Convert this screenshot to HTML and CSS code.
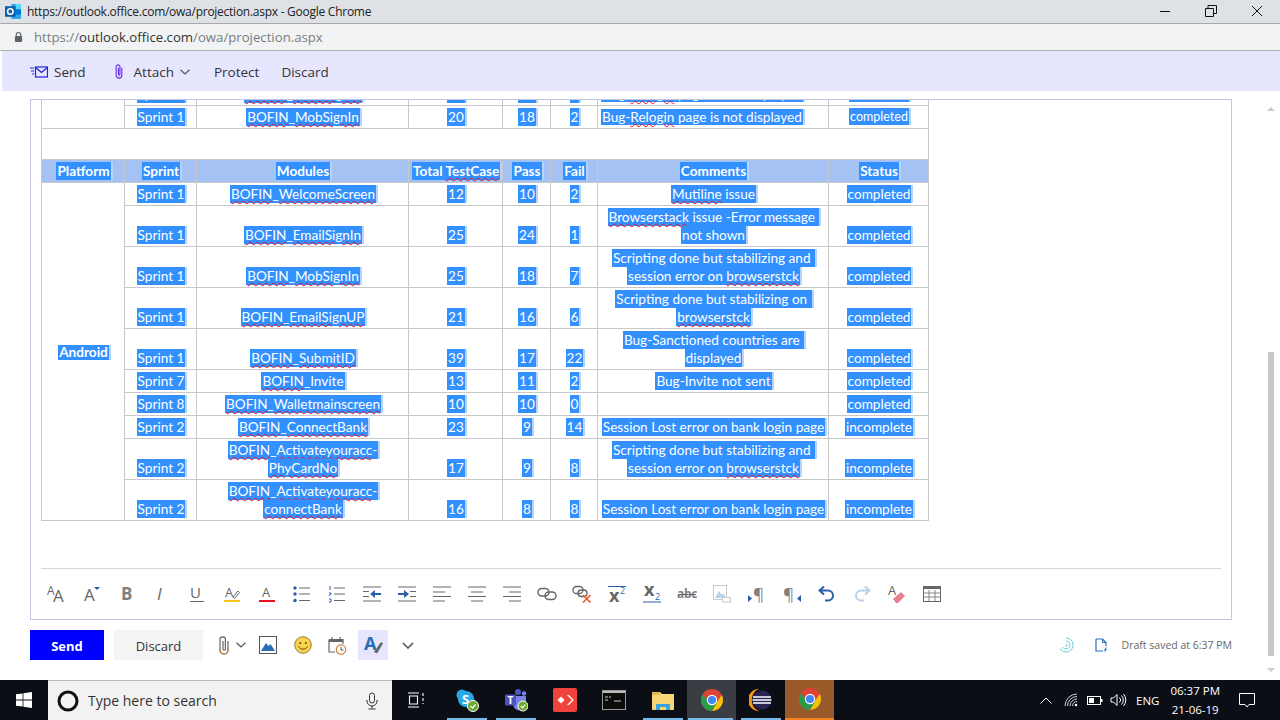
FILE: index.html
```html
<!DOCTYPE html>
<html lang="en">

<head>
  <meta charset="UTF-8">
  <title>https://outlook.office.com/owa/projection.aspx - Google Chrome</title>
  <link rel="stylesheet" href="styles.css">
</head>

<body>
  <div id="window">
    <header class="title-bar">
      <svg class="logo" viewBox="0 0 16 16">
        <path d="M6 1h9v14H6z" fill="#28a8ea" />
        <path d="M10 1h5v5h-5z" fill="#50d9ff" />
        <path d="M10 6h5v5h-5z" fill="#0078d4" />
        <rect x="0" y="3" width="10" height="10" fill="#0f5fa8" />
        <circle cx="5" cy="8" r="2.6" fill="none" stroke="#fff" stroke-width="1.5" />
      </svg>
      <span class="title-text">https://outlook.office.com/owa/projection.aspx - Google Chrome</span>
      <div class="win-buttons">
        <svg viewBox="0 0 14 14"><path d="M2 7.500h10" stroke="#111" fill="none" /></svg>
        <svg viewBox="0 0 14 14"><path d="M1.500 4.500h8v8h-8zM4 4.500V1.500h8.500v8H9.500" stroke="#111" fill="none" /></svg>
        <svg viewBox="0 0 14 14"><path d="M2 2l10 10M12 2L2 12" stroke="#111" fill="none" /></svg>
      </div>
    </header>

    <div class="address-bar">
      <svg class="lock" viewBox="0 0 10 12">
        <path d="M2.500 5V3.500a2.500 2.500 0 0 1 5 0V5" fill="none" stroke="#5f6368" stroke-width="1.300" />
        <rect x="1" y="5" width="8" height="6.500" rx="1" fill="#5f6368" />
      </svg>
      <span class="url"><span class="dim">https://</span>outlook.office.com<span class="dim">/owa/projection.aspx</span></span>
    </div>

    <div class="command-bar">
      <a class="cmd cmd-send">
        <svg viewBox="0 0 18 12" class="cmd-ico">
          <rect x="5.500" y="1" width="12" height="10" fill="none" stroke="#2020e0" stroke-width="1.200" />
          <path d="M5.500 1.500l6 5 6-5M0 2h4M1 5h3M2 8h2" fill="none" stroke="#2020e0" stroke-width="1.200" />
        </svg>
        Send
      </a>
      <a class="cmd cmd-attach">
        <svg viewBox="0 0 12 18" class="clip-ico">
          <path d="M9 5v8a3 3 0 0 1-6 0V4a2 2 0 0 1 4 0v8a.8.8 0 0 1-1.600 0V5" fill="none" stroke="#6a2ce0" stroke-width="1.200" />
        </svg>
        Attach
        <svg viewBox="0 0 10 6" class="chev"><path d="M.5.8L5 5 9.500.8" fill="none" stroke="#555" stroke-width="1.200" /></svg>
      </a>
      <a class="cmd cmd-protect">Protect</a>
      <a class="cmd">Discard</a>
    </div>

    <main class="mail-area">
      <div class="compose-col">
        <section class="editor-frame">
          <div class="editor-body">
            <table class="report">
              <colgroup>
                <col class="c-platform">
                <col class="c-sprint">
                <col class="c-module">
                <col class="c-total">
                <col class="c-pass">
                <col class="c-fail">
                <col class="c-comment">
                <col class="c-status">
              </colgroup>
              <tr>
                <td rowspan="2"></td>
                <td><span class="sel">Sprint 1</span></td>
                <td><span class="sel"><span class="sp">BOFIN</span>_<span class="sp">EmailSignIn</span></span></td>
                <td><span class="sel">25</span></td>
                <td><span class="sel">24</span></td>
                <td><span class="sel">1</span></td>
                <td class="note"><span class="sel">Bug-<span class="sp">Relogin</span> page is not displayed</span></td>
                <td class="small"><span class="sel">completed</span></td>
              </tr>
              <tr>
                <td><span class="sel">Sprint 1</span></td>
                <td><span class="sel"><span class="sp">BOFIN</span>_<span class="sp">MobSignIn</span></span></td>
                <td><span class="sel">20</span></td>
                <td><span class="sel">18</span></td>
                <td><span class="sel">2</span></td>
                <td class="note"><span class="sel">Bug-<span class="sp">Relogin</span> page is not displayed</span></td>
                <td class="small"><span class="sel">completed</span></td>
              </tr>
              <tr class="spacer">
                <td colspan="8"></td>
              </tr>
              <tr class="head">
                <td><span class="sel">Platform</span></td>
                <td><span class="sel">Sprint</span></td>
                <td><span class="sel">Modules</span></td>
                <td><span class="sel">Total <span class="sp">TestCase</span></span></td>
                <td><span class="sel">Pass</span></td>
                <td><span class="sel">Fail</span></td>
                <td><span class="sel">Comments</span></td>
                <td><span class="sel">Status</span></td>
              </tr>
              <tr>
                <td rowspan="10" class="platform"><span class="sel">Android</span></td>
                <td><span class="sel">Sprint 1</span></td>
                <td><span class="sel"><span class="sp">BOFIN</span>_<span class="sp">WelcomeScreen</span></span></td>
                <td><span class="sel">12</span></td>
                <td><span class="sel">10</span></td>
                <td><span class="sel">2</span></td>
                <td><span class="sel"><span class="sp">Mutiline</span> issue</span></td>
                <td><span class="sel">completed</span></td>
              </tr>
              <tr>
                <td><span class="sel">Sprint 1</span></td>
                <td><span class="sel"><span class="sp">BOFIN</span>_<span class="sp">EmailSignIn</span></span></td>
                <td><span class="sel">25</span></td>
                <td><span class="sel">24</span></td>
                <td><span class="sel">1</span></td>
                <td><span class="sel"><span class="sp">Browserstack</span> issue -Error message&nbsp;</span><br><span class="sel">not shown</span></td>
                <td><span class="sel">completed</span></td>
              </tr>
              <tr>
                <td><span class="sel">Sprint 1</span></td>
                <td><span class="sel"><span class="sp">BOFIN</span>_<span class="sp">MobSignIn</span></span></td>
                <td><span class="sel">25</span></td>
                <td><span class="sel">18</span></td>
                <td><span class="sel">7</span></td>
                <td><span class="sel">Scripting done but stabilizing and&nbsp;</span><br><span class="sel">session error on <span class="sp">browserstck</span></span></td>
                <td><span class="sel">completed</span></td>
              </tr>
              <tr>
                <td><span class="sel">Sprint 1</span></td>
                <td><span class="sel"><span class="sp">BOFIN</span>_<span class="sp">EmailSignUP</span></span></td>
                <td><span class="sel">21</span></td>
                <td><span class="sel">16</span></td>
                <td><span class="sel">6</span></td>
                <td><span class="sel">Scripting done but stabilizing on&nbsp;</span><br><span class="sel"><span class="sp">browserstck</span></span></td>
                <td><span class="sel">completed</span></td>
              </tr>
              <tr>
                <td><span class="sel">Sprint 1</span></td>
                <td><span class="sel"><span class="sp">BOFIN</span>_<span class="sp">SubmitID</span></span></td>
                <td><span class="sel">39</span></td>
                <td><span class="sel">17</span></td>
                <td><span class="sel">22</span></td>
                <td><span class="sel">Bug-Sanctioned countries are&nbsp;</span><br><span class="sel">displayed</span></td>
                <td><span class="sel">completed</span></td>
              </tr>
              <tr>
                <td><span class="sel">Sprint 7</span></td>
                <td><span class="sel"><span class="sp">BOFIN</span>_Invite</span></td>
                <td><span class="sel">13</span></td>
                <td><span class="sel">11</span></td>
                <td><span class="sel">2</span></td>
                <td><span class="sel">Bug-Invite not sent</span></td>
                <td><span class="sel">completed</span></td>
              </tr>
              <tr>
                <td><span class="sel">Sprint 8</span></td>
                <td><span class="sel"><span class="sp">BOFIN</span>_<span class="sp">Walletmainscreen</span></span></td>
                <td><span class="sel">10</span></td>
                <td><span class="sel">10</span></td>
                <td><span class="sel">0</span></td>
                <td></td>
                <td><span class="sel">completed</span></td>
              </tr>
              <tr>
                <td><span class="sel">Sprint 2</span></td>
                <td><span class="sel"><span class="sp">BOFIN</span>_<span class="sp">ConnectBank</span></span></td>
                <td><span class="sel">23</span></td>
                <td><span class="sel">9</span></td>
                <td><span class="sel">14</span></td>
                <td><span class="sel">Session Lost error on bank login page</span></td>
                <td><span class="sel">incomplete</span></td>
              </tr>
              <tr>
                <td><span class="sel">Sprint 2</span></td>
                <td><span class="sel"><span class="sp">BOFIN</span>_<span class="sp">Activateyouracc</span>-</span><br><span class="sel"><span class="sp">PhyCardNo</span></span></td>
                <td><span class="sel">17</span></td>
                <td><span class="sel">9</span></td>
                <td><span class="sel">8</span></td>
                <td><span class="sel">Scripting done but stabilizing and&nbsp;</span><br><span class="sel">session error on <span class="sp">browserstck</span></span></td>
                <td><span class="sel">incomplete</span></td>
              </tr>
              <tr>
                <td><span class="sel">Sprint 2</span></td>
                <td><span class="sel"><span class="sp">BOFIN</span>_<span class="sp">Activateyouracc</span>-</span><br><span class="sel"><span class="sp">connectBank</span></span></td>
                <td><span class="sel">16</span></td>
                <td><span class="sel">8</span></td>
                <td><span class="sel">8</span></td>
                <td><span class="sel">Session Lost error on bank login page</span></td>
                <td><span class="sel">incomplete</span></td>
              </tr>
            </table>
          </div>

          <div class="format-bar">
            <!-- font size -->
            <svg viewBox="0 0 20 20"><text x="0" y="11" font-size="12" class="ti">A</text><text x="6" y="18" font-size="17" class="ti">A</text></svg>
            <svg viewBox="0 0 20 20"><text x="2" y="17" font-size="17" class="ti">A</text><path d="M12 3h6l-3 3z" fill="#2b5fa8" /></svg>
            <svg viewBox="0 0 20 20"><text x="4" y="16" font-size="17" font-weight="700" class="tl">B</text></svg>
            <svg viewBox="0 0 20 20"><text x="5" y="16" font-size="17" font-style="italic" class="ti">I</text></svg>
            <svg viewBox="0 0 20 20"><text x="3" y="14" font-size="15" class="ti">U</text><path d="M3 17.500h14" stroke="#666" /></svg>
            <svg viewBox="0 0 20 20"><text x="3" y="13" font-size="13" class="ti">A</text><path d="M11 13l5-6 1.500 1.500-5 6z" fill="none" stroke="#666" /><path d="M2 17h16" stroke="#f7c325" stroke-width="2" /></svg>
            <svg viewBox="0 0 20 20"><text x="5" y="13" font-size="13" class="ti">A</text><path d="M2 17h16" stroke="#e81123" stroke-width="2" /></svg>
            <!-- lists -->
            <svg viewBox="0 0 20 20"><circle cx="3" cy="4" r="1.700" fill="#2b5fa8" /><circle cx="3" cy="10" r="1.700" fill="#2b5fa8" /><circle cx="3" cy="16.500" r="1.700" fill="#2b5fa8" /><path d="M7 4h11M7 10h11M7 16.500h11" stroke="#666" /></svg>
            <svg viewBox="0 0 20 20"><path d="M3 2v4M2 9h2v1l-2 1.500V12M2 15h2v3H2" stroke="#2b5fa8" fill="none" /><path d="M7 4h11M7 10h11M7 16.500h11" stroke="#666" /></svg>
            <!-- indent -->
            <svg viewBox="0 0 20 20"><path d="M1 3h18M1 17h18M1 7.500h6M1 12.500h6M13 10h6" stroke="#666" /><path d="M8 10l5-4v8z" fill="#2b5fa8" /><path d="M12 10h7" stroke="#2b5fa8" stroke-width="2" /></svg>
            <svg viewBox="0 0 20 20"><path d="M1 3h18M1 17h18M13 7.500h6M13 12.500h6" stroke="#666" /><path d="M12 10L7 6v8z" fill="#2b5fa8" /><path d="M1 10h7" stroke="#2b5fa8" stroke-width="2" /></svg>
            <!-- align -->
            <svg viewBox="0 0 20 20"><path d="M1 3h18M1 8h12M1 12.500h18M1 17h12" stroke="#666" /></svg>
            <svg viewBox="0 0 20 20"><path d="M1 3h18M4 8h12M1 12.500h18M4 17h12" stroke="#666" /></svg>
            <svg viewBox="0 0 20 20"><path d="M1 3h18M7 8h12M1 12.500h18M7 17h12" stroke="#666" /></svg>
            <!-- link -->
            <svg viewBox="0 0 20 20"><rect x="1" y="4.500" width="11" height="7.500" rx="3.700" fill="none" stroke="#666" stroke-width="1.400" /><rect x="8" y="8" width="11" height="7.500" rx="3.700" fill="none" stroke="#666" stroke-width="1.400" /></svg>
            <svg viewBox="0 0 20 20"><rect x="1" y="2.500" width="10" height="7" rx="3.500" fill="none" stroke="#666" stroke-width="1.300" /><rect x="6" y="6" width="9" height="6.500" rx="3.200" fill="none" stroke="#666" stroke-width="1.300" /><path d="M11 11l7.500 7.500M18.500 11L11 18.500" stroke="#f15a29" stroke-width="1.700" /></svg>
            <!-- scripts -->
            <svg viewBox="0 0 20 20"><path d="M1 2.500h18" stroke="#2b5fa8" /><text x="2" y="18" font-size="18" font-weight="700" class="ti">x</text><text x="13" y="10" font-size="9" class="tb">2</text></svg>
            <svg viewBox="0 0 20 20"><path d="M1 18h18" stroke="#2b5fa8" /><text x="2" y="12" font-size="18" font-weight="700" class="ti">x</text><text x="13" y="16" font-size="9" class="tb">2</text></svg>
            <svg viewBox="0 0 20 20"><text x="0" y="14" font-size="12" font-weight="700" letter-spacing="-.3" class="tl">abc</text><path d="M1 10.500h18" stroke="#666" /></svg>
            <svg viewBox="0 0 20 20"><rect x="1.500" y="1.500" width="13" height="14" fill="#fff" stroke="#c8c8c8" /><path d="M3 14l4-7 3 4 1-2 3 5z" fill="#b8cfee" /><rect x="10.500" y="13.500" width="8" height="4.500" fill="#fff" stroke="#c8c8c8" /></svg>
            <!-- direction -->
            <svg viewBox="0 0 20 20"><path d="M1 11l4 3.500L1 18z" fill="#2b5fa8" /><text x="6" y="16" font-size="17" class="tl">¶</text></svg>
            <svg viewBox="0 0 20 20"><path d="M19 11l-4 3.500 4 3.500z" fill="#2b5fa8" /><text x="1" y="16" font-size="17" class="tl">¶</text></svg>
            <!-- undo redo -->
            <svg viewBox="0 0 20 20"><path d="M7 2.500L2.500 6.500 7 10.500M3 6.500h8a5 5 0 0 1 0 10H8" fill="none" stroke="#2b5fa8" stroke-width="2" /></svg>
            <svg viewBox="0 0 20 20"><path d="M13 2.500l4.500 4-4.500 4M17 6.500H9a5 5 0 0 0 0 10h3" fill="none" stroke="#bcd0ea" stroke-width="2" /></svg>
            <!-- clear format, table -->
            <svg viewBox="0 0 20 20"><text x="1" y="11" font-size="13" class="ti">A</text><path d="M6 15l8-7 4 4-7 7H9z" fill="#e8808f" /></svg>
            <svg viewBox="0 0 20 20"><rect x="1.500" y="2.500" width="17" height="15" fill="#fff" stroke="#666" /><path d="M1.500 3.500h17" stroke="#666" stroke-width="3" /><path d="M1.500 9h17M1.500 13h17M7 6v11M13 6v11" stroke="#888" /></svg>
          </div>
        </section>

        <div class="action-row">
          <button class="btn btn-send">Send</button>
          <button class="btn btn-discard">Discard</button>
          <svg class="act-clip" viewBox="0 0 16 20">
            <path d="M12 6v9a4 4 0 0 1-8 0V4.500a2.700 2.700 0 0 1 5.400 0V14a1.200 1.200 0 0 1-2.400 0V6" fill="none" stroke="#666" stroke-width="1.200" />
            <path d="M4 14v1a4 4 0 0 0 8 0v-1" fill="none" stroke="#c9823a" stroke-width="1.200" />
          </svg>
          <svg class="act-chev" viewBox="0 0 10 6"><path d="M.5.8L5 5 9.500.8" fill="none" stroke="#555" stroke-width="1.200" /></svg>
          <svg class="act-image" viewBox="0 0 18 18">
            <rect x=".5" y=".5" width="17" height="17" fill="#fff" stroke="#555" />
            <path d="M2 15l5-8 2.500 3 2-2 4.500 7z" fill="#2b6cb8" />
          </svg>
          <svg class="act-smile" viewBox="0 0 18 18">
            <circle cx="9" cy="9" r="8.300" fill="#f9d34c" stroke="#7a6320" stroke-width=".8" />
            <circle cx="6.200" cy="7" r="1" fill="#5a4a10" />
            <circle cx="11.800" cy="7" r="1" fill="#5a4a10" />
            <path d="M4.500 10.500c1.500 3.500 7.500 3.500 9 0" fill="none" stroke="#5a4a10" stroke-width="1" />
          </svg>
          <svg class="act-cal" viewBox="0 0 19 19">
            <path d="M1 3.500h14V8M1 3.500V16h6" fill="none" stroke="#666" stroke-width="1.200" />
            <path d="M1 5h14" stroke="#666" stroke-width="2" />
            <path d="M4 1v3M12 1v3" stroke="#666" stroke-width="1.200" />
            <circle cx="13" cy="13.500" r="4.700" fill="#fff" stroke="#c9823a" stroke-width="1.200" />
            <path d="M13 11v3h2.500" fill="none" stroke="#555" />
          </svg>
          <div class="act-format">
            <svg viewBox="0 0 24 24">
              <text x="3" y="17" font-size="18" font-weight="700" class="tb">A</text>
              <path d="M13 19l7-10 2 1.500-6 10z" fill="#666" />
            </svg>
          </div>
          <svg class="act-more" viewBox="0 0 12 7"><path d="M1 1l5 5 5-5" fill="none" stroke="#555" stroke-width="1.600" /></svg>
          <div class="draft-info">
            <svg class="spin" viewBox="0 0 16 16">
              <path d="M8 1a7 7 0 1 1-6 10.500M8 4a4 4 0 1 1-3.500 6M8 7a1.200 1.200 0 1 1-1 1.800" fill="none" stroke="#6cc6dc" stroke-width="1" />
            </svg>
            <svg class="doc" viewBox="0 0 13 15">
              <path d="M1 1h6.500L11 4.500V8M1 1v12h7" fill="none" stroke="#2b6cb8" stroke-width="1.200" />
              <path d="M7.500 1v3.500H11" fill="none" stroke="#2b6cb8" />
              <path d="M12 8l-3 4 1 .5-1 2.500 3-4-1-.5z" fill="#2b6cb8" />
            </svg>
            <span class="draft-text">Draft saved at 6:37 PM</span>
          </div>
        </div>
      </div>

      <div class="scroll-rail">
        <i class="arrow-up"></i>
        <div class="scroll-track"><div class="scroll-thumb"></div></div>
        <i class="arrow-down"></i>
      </div>
    </main>

    <footer class="taskbar">
      <div class="start">
        <svg viewBox="0 0 16 16"><path d="M0 2.300l6.600-.9v6.200H0zM7.400 1.300L16 0v7.600H7.400zM0 8.400h6.600v6.200L0 13.700zM7.400 8.400H16V16l-8.600-1.200z" fill="#fff" /></svg>
      </div>
      <div class="search-box">
        <svg class="cortana" viewBox="0 0 22 22"><circle cx="11" cy="11" r="9" fill="none" stroke="#111" stroke-width="3" /></svg>
        <span class="search-text">Type here to search</span>
        <svg class="mic" viewBox="0 0 14 18">
          <rect x="4.500" y="1" width="5" height="10" rx="2.500" fill="none" stroke="#333" />
          <path d="M2 8v1a5 5 0 0 0 10 0V8M7 14v2.500M3.500 17h7" fill="none" stroke="#333" />
        </svg>
      </div>
      <div class="task-view">
        <svg viewBox="0 0 18 16"><path d="M1 1h11M1 15h11M2.500 4h8v8h-8zM16 1v3M16 6v3M16 11v1" fill="none" stroke="#fff" stroke-width="1.100" /></svg>
      </div>
      <div class="task-icons">
        <div class="task on">
          <svg viewBox="0 0 24 24">
            <circle cx="7" cy="7" r="5.500" fill="#28a8ea" /><circle cx="15" cy="15" r="5.500" fill="#28a8ea" />
            <circle cx="11" cy="11" r="8" fill="#28a8ea" />
            <text x="7" y="16" font-size="13" font-weight="700" class="tw">S</text>
            <circle cx="18" cy="18" r="5.500" fill="#6aa82f" stroke="#fff" /><path d="M15.500 18l2 2 3-3.500" fill="none" stroke="#fff" stroke-width="1.200" />
          </svg>
        </div>
        <div class="task on">
          <svg viewBox="0 0 24 24">
            <circle cx="14" cy="4" r="3" fill="#5059c9" /><circle cx="20" cy="5.500" r="2.200" fill="#7b83eb" />
            <path d="M9 8h13v8a5 5 0 0 1-13 0z" fill="#7b83eb" />
            <rect x="1" y="6.500" width="11" height="11" rx="1" fill="#4b53bc" />
            <text x="3.500" y="15.500" font-size="10" font-weight="700" class="tw">T</text>
            <circle cx="19" cy="18" r="5" fill="#6aa82f" stroke="#fff" /><path d="M16.800 18l1.800 1.800 2.700-3.200" fill="none" stroke="#fff" stroke-width="1.200" />
          </svg>
        </div>
        <div class="task">
          <svg viewBox="0 0 24 24">
            <rect width="24" height="24" rx="2" fill="#ef443b" />
            <path d="M8 8.500l3.500 3.500L8 15.500 4.500 12zM14 7l5 5-5 5 1.800 0 5-5-5-5z" fill="#fff" />
          </svg>
        </div>
        <div class="task">
          <svg viewBox="0 0 24 20">
            <rect x=".5" y=".5" width="23" height="19" fill="#0c0c0c" stroke="#999" />
            <path d="M1 1h22v2H1z" fill="#bbb" />
            <path d="M3 7h3M7 7h2M3 10h3M12 11h7" stroke="#ccc" />
          </svg>
        </div>
        <div class="task on">
          <svg viewBox="0 0 24 20">
            <path d="M1 2h8l2 2h12v15a1 1 0 0 1-1 1H2a1 1 0 0 1-1-1z" fill="#f7d774" />
            <path d="M1 2h8v3H1z" fill="#e6b94a" />
            <path d="M5 20v-6h14v6h-4v-3H9v3z" fill="#35a4e0" />
          </svg>
        </div>
        <div class="task on current">
          <svg viewBox="0 0 24 24">
            <circle cx="12" cy="12" r="11" fill="#db4437" />
            <path d="M21.800 7A11 11 0 0 1 12 23l5-9z" fill="#f4c20d" />
            <path d="M2.500 6.500A11 11 0 0 0 12 23l5-9-5 2z" fill="#2a9d4a" />
            <circle cx="12" cy="12" r="5.200" fill="#fff" /><circle cx="12" cy="12" r="4" fill="#4285f4" />
          </svg>
        </div>
        <div class="task on">
          <svg viewBox="0 0 24 24">
            <path d="M10 1a11 11 0 0 0 0 22A12 12 0 0 1 10 1z" fill="#f7941e" />
            <circle cx="13" cy="12" r="9.500" fill="#2c2255" />
            <path d="M4 9h18M3.500 12h19M4 15h18" stroke="#fff" stroke-width="1.500" />
          </svg>
        </div>
        <div class="task alert">
          <svg viewBox="0 0 24 24">
            <circle cx="12" cy="12" r="11" fill="#db4437" />
            <path d="M21.800 7A11 11 0 0 1 12 23l5-9z" fill="#f4c20d" />
            <path d="M2.500 6.500A11 11 0 0 0 12 23l5-9-5 2z" fill="#2a9d4a" />
            <circle cx="12" cy="12" r="5.200" fill="#fff" /><circle cx="12" cy="12" r="4" fill="#4285f4" />
          </svg>
        </div>
      </div>
      <div class="tray">
        <svg class="tray-chev" viewBox="0 0 12 7"><path d="M.5 6.500L6 1l5.500 5.500" fill="none" stroke="#fff" /></svg>
        <svg class="tray-wifi" viewBox="0 0 14 14"><path d="M1 13A12 12 0 0 1 13 1M3.500 13A9.500 9.500 0 0 1 13 3.500M6 13a7 7 0 0 1 7-7M8.500 13A4.500 4.500 0 0 1 13 8.500" fill="none" stroke="#ccc" /><circle cx="12" cy="12" r="1.300" fill="#fff" /></svg>
        <svg class="tray-batt" viewBox="0 0 16 9"><rect x=".5" y=".5" width="13" height="8" fill="none" stroke="#fff" /><rect x="2" y="2" width="5" height="5" fill="#fff" /><path d="M14 3h1.500v3H14z" fill="#fff" /></svg>
        <svg class="tray-vol" viewBox="0 0 17 14"><path d="M1 5h2.500L7 1.500v11L3.500 9H1z" fill="none" stroke="#fff" /><path d="M9.500 4.500a3.500 3.500 0 0 1 0 5M11.500 2.500a6.500 6.500 0 0 1 0 9M13.500 1a9 9 0 0 1 0 12" fill="none" stroke="#fff" /></svg>
        <span class="tray-lang">ENG</span>
        <div class="tray-clock">
          <span>06:37 PM</span>
          <span>21-06-19</span>
        </div>
        <svg class="tray-note" viewBox="0 0 16 16"><path d="M.5 1.500h15v11H10L8 15l-2-2.500H.5z" fill="none" stroke="#fff" /></svg>
      </div>
    </footer>
  </div>
</body>

</html>
```

FILE: styles.css
```css
/* reset */
* {
  margin: 0;
  padding: 0;
  box-sizing: border-box;
}

body {
  width: 1280px;
  height: 720px;
  overflow: hidden;
  background-color: #fff;
  font-family: "Open Sans", "Liberation Sans", sans-serif;
  color: #333;
}

svg {
  display: block;
  flex: none;
}

#window {
  display: flex;
  flex-direction: column;
  height: 720px;
}

/* chrome window title */
.title-bar {
  display: flex;
  align-items: center;
  flex: none;
  height: 24px;
  padding-left: 5px;
  background-color: #dee1e6;
  border-bottom: 1px solid #a9a9a9;
}

.logo {
  width: 17px;
  height: 17px;
  margin-right: 5px;
}

.title-text {
  font-size: 12px;
  letter-spacing: -.26px;
  color: #222;
}

.win-buttons {
  display: flex;
  margin-left: auto;
  padding-bottom: 2px;
}

.win-buttons svg {
  width: 14px;
  height: 14px;
  margin-left: 32px;
}

.win-buttons svg:last-child {
  margin-right: 16px;
}

.address-bar {
  display: flex;
  align-items: center;
  flex: none;
  height: 27px;
  padding-left: 14px;
  background-color: #f1f3f4;
  border-bottom: 1px solid #b4b4b4;
}

.lock {
  width: 9px;
  height: 12px;
  margin-right: 11px;
}

.url {
  font-size: 13.200px;
  color: #333;
}

.url .dim {
  color: #7a7d80;
}

/* outlook command bar */
.command-bar {
  display: flex;
  align-items: center;
  flex: none;
  height: 40px;
  margin-left: 2px;
  padding-left: 28px;
  padding-top: 1px;
  background-color: #e6e6ff;
  font-size: 13.500px;
}

.cmd {
  display: flex;
  align-items: center;
  color: #333;
}

.cmd-ico {
  width: 18px;
  height: 12px;
  margin-right: 6px;
}

.clip-ico {
  width: 12px;
  height: 17px;
  margin-right: 9px;
}

.chev {
  width: 10px;
  height: 6px;
  margin-left: 6px;
}

.cmd-send {
  margin-right: 27px;
}

.cmd-attach {
  margin-right: 24px;
}

.cmd-protect {
  margin-right: 22px;
}

/* main compose */
.mail-area {
  display: flex;
  flex: 1;
  min-height: 0;
}

.compose-col {
  flex: none;
  width: 1232px;
  margin-left: 30px;
  padding-top: 8px;
}

.editor-frame {
  display: flex;
  flex-direction: column;
  width: 1202px;
  height: 521px;
  border: 1px solid #c4c4e8;
}

.editor-body {
  flex: none;
  height: 468px;
  padding-left: 10px;
  overflow: hidden;
}

.report {
  width: 887px;
  margin-top: -18px;
  table-layout: fixed;
  border-collapse: collapse;
  font-family: Lato, "Liberation Sans", sans-serif;
  font-size: 13.600px;
  color: #fff;
}

.report td {
  padding: 2px 0 2px 3px;
  border: 1px solid #c8c8c8;
  text-align: center;
  vertical-align: bottom;
  line-height: 18px;
}

.c-platform { width: 83px; }
.c-sprint { width: 72px; }
.c-module { width: 212px; }
.c-total { width: 94px; }
.c-pass { width: 48px; }
.c-fail { width: 47px; }
.c-comment { width: 231px; }
.c-status { width: 100px; }

.sel {
  display: inline-block;
  padding: 0 1px;
  background-color: #3390ff;
  border-right: 2px solid #b5d5fb;
  white-space: nowrap;
}

.sp {
  text-decoration: underline wavy #e81123 1px;
  text-underline-offset: 1px;
}

.report .spacer td {
  height: 31px;
}

.report .head td {
  background-color: #a4c2f4;
  font-weight: 700;
  vertical-align: middle;
}

.report .platform {
  font-weight: 700;
  vertical-align: middle;
}

.platform .sel {
  line-height: 15px;
}

.report .note {
  text-align: left;
  vertical-align: top;
  padding-left: 3px;
}

.note .sel {
  line-height: 16px;
}

.small {
  font-size: 12.500px;
}

.small .sel {
  line-height: 17px;
}

/* format toolbar */
.format-bar {
  display: flex;
  align-items: center;
  flex: none;
  height: 51px;
  margin: 0 10px;
  padding-left: 6px;
  border-top: 1px solid #d6d6d6;
}

.format-bar svg {
  width: 20px;
  height: 20px;
  margin-right: 15px;
}

.ti {
  font-family: "Open Sans", sans-serif;
  fill: #666;
}

.tl {
  font-family: "Open Sans", sans-serif;
  fill: #808080;
}

.tb {
  font-family: "Open Sans", sans-serif;
  fill: #2b6cb8;
}

.tw {
  font-family: "Open Sans", sans-serif;
  fill: #fff;
}

/* send row */
.action-row {
  display: flex;
  align-items: center;
  width: 1202px;
  height: 30px;
  margin-top: 10px;
}

.btn {
  height: 30px;
  padding-top: 1px;
  border: 0;
  font-family: "Open Sans", sans-serif;
  font-size: 13px;
}

.btn-send {
  width: 74px;
  margin-right: 10px;
  background-color: #00f;
  color: #fff;
  font-weight: 700;
}

.btn-discard {
  width: 89px;
  margin-right: 13px;
  background-color: #f4f4f4;
  color: #333;
}

.act-clip {
  width: 16px;
  height: 20px;
  margin-right: 4px;
}

.act-chev {
  width: 10px;
  height: 6px;
  margin-right: 13px;
}

.act-image {
  width: 18px;
  height: 18px;
  margin-right: 17px;
}

.act-smile {
  width: 18px;
  height: 18px;
  margin-right: 16px;
}

.act-cal {
  width: 19px;
  height: 19px;
  margin-right: 11px;
}

.act-format {
  display: flex;
  align-items: center;
  justify-content: center;
  width: 30px;
  height: 30px;
  margin-right: 14px;
  background-color: #e6e6ff;
}

.act-format svg {
  width: 24px;
  height: 24px;
}

.act-more {
  width: 12px;
  height: 7px;
}

.draft-info {
  display: flex;
  align-items: center;
  margin-left: auto;
}

.spin {
  width: 16px;
  height: 16px;
  margin-right: 21px;
}

.doc {
  width: 13px;
  height: 15px;
  margin-right: 14px;
}

.draft-text {
  font-size: 10.500px;
  color: #666;
}

/* page scrollbar */
.scroll-rail {
  display: flex;
  flex-direction: column;
  align-items: center;
  flex: none;
  width: 18px;
  padding-top: 16px;
}

.arrow-up {
  width: 0;
  height: 0;
  border-left: 4px solid transparent;
  border-right: 4px solid transparent;
  border-bottom: 4px solid #ccc;
}

.arrow-down {
  width: 0;
  height: 0;
  margin-top: 12px;
  border-left: 4px solid transparent;
  border-right: 4px solid transparent;
  border-top: 4px solid #ccc;
}

.scroll-track {
  display: flex;
  flex-direction: column;
  flex: none;
  height: 545px;
  padding-top: 241px;
}

.scroll-thumb {
  flex: 1;
  width: 6px;
  background-color: #c8c8c8;
}

/* windows taskbar */
.taskbar {
  display: flex;
  align-items: center;
  flex: none;
  height: 40px;
  background-color: #0b0e14;
}

.start {
  display: flex;
  justify-content: center;
  width: 48px;
}

.start svg {
  width: 16px;
  height: 16px;
}

.search-box {
  display: flex;
  align-items: center;
  width: 344px;
  height: 40px;
  padding-left: 9px;
  background-color: #f2f2f2;
  border-top: 1px solid #bbb;
}

.cortana {
  width: 22px;
  height: 22px;
  margin-right: 9px;
}

.search-text {
  font-size: 14px;
  color: #333;
}

.mic {
  width: 14px;
  height: 18px;
  margin-left: auto;
  margin-right: 13px;
}

.task-view {
  display: flex;
  justify-content: center;
  width: 48px;
}

.task-view svg {
  width: 18px;
  height: 16px;
}

.task-icons {
  display: flex;
  height: 40px;
  margin-left: 2px;
}

.task {
  position: relative;
  display: flex;
  align-items: center;
  justify-content: center;
  width: 49px;
  height: 40px;
}

.task svg {
  width: 24px;
  height: 24px;
}

.task.on::after {
  content: "";
  position: absolute;
  left: 5px;
  right: 4px;
  bottom: 0;
  height: 2px;
  background-color: #76b9ed;
}

.task.current {
  background-color: #3a3d44;
}

.task.current::after {
  left: 1px;
  right: 3px;
}

.task.alert {
  background-color: #985a28;
  border-bottom: 2px solid #f7811f;
}

.tray {
  display: flex;
  align-items: center;
  margin-left: auto;
  color: #fff;
}

.tray-chev {
  width: 12px;
  height: 7px;
  margin-right: 12px;
}

.tray-wifi {
  width: 14px;
  height: 14px;
  margin-right: 9px;
}

.tray-batt {
  width: 16px;
  height: 9px;
  margin-right: 7px;
}

.tray-vol {
  width: 17px;
  height: 14px;
  margin-right: 9px;
}

.tray-lang {
  font-size: 11.500px;
  margin-right: 11px;
}

.tray-clock {
  display: flex;
  flex-direction: column;
  align-items: center;
  margin-right: 19px;
  font-size: 11.500px;
  line-height: 19px;
}

.tray-note {
  width: 16px;
  height: 16px;
  margin-right: 25px;
}
```
